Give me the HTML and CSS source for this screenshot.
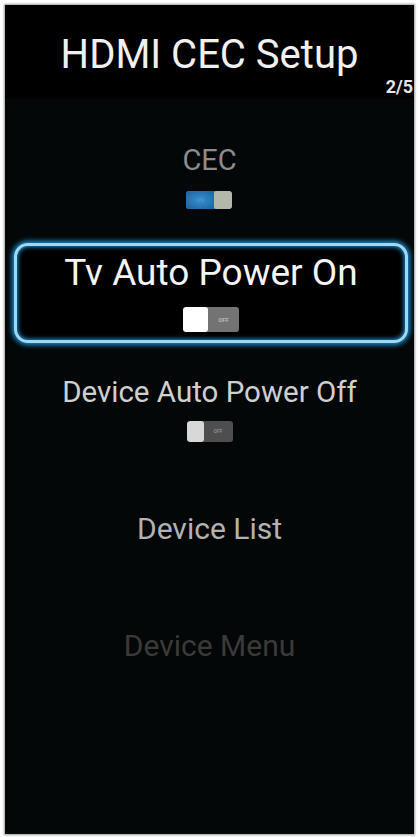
FILE: index.html
```html
<!DOCTYPE html>
<html lang="en">
<head>
<meta charset="utf-8">
<title>HDMI CEC Setup</title>
<link rel="stylesheet" href="styles.css">
</head>
<body>
<div class="screen">
  <header class="header">
    <h1 class="title">HDMI CEC Setup</h1>
    <div class="page">2/5</div>
  </header>
  <main class="menu">
    <div class="item item-cec">
      <div class="label label-cec">CEC</div>
      <div class="toggle toggle-on"><span class="track-on">ON</span><span class="knob"></span></div>
    </div>
    <div class="item item-focus">
      <div class="label label-focus">Tv Auto Power On</div>
      <div class="toggle toggle-focus"><span class="knob"></span><span class="off-text">OFF</span></div>
    </div>
    <div class="item item-dapo">
      <div class="label label-dapo">Device Auto Power Off</div>
      <div class="toggle toggle-off"><span class="knob"></span><span class="off-text">OFF</span></div>
    </div>
    <div class="item item-list">
      <div class="label label-list">Device List</div>
    </div>
    <div class="item item-dmenu">
      <div class="label label-dmenu">Device Menu</div>
    </div>
  </main>
</div>
</body>
</html>
```
FILE: styles.css
```css
html, body {
  margin: 0;
  padding: 0;
  background: #ffffff;
}
body {
  width: 420px;
  height: 837px;
  overflow: hidden;
  font-family: Roboto, "Noto Sans", "Liberation Sans", sans-serif;
}
.screen {
  margin: 5px 6px 3px 5px;
  width: 409px;
  height: 829px;
  background: #040707;
  box-shadow: 0 0 2px 1px #9a9a9a;
  overflow: hidden;
  display: flex;
  flex-direction: column;
}
.header {
  background: #000000;
  padding: 30px 0 2px;
  box-sizing: border-box;
  display: flex;
  flex-direction: column;
  align-items: center;
}
.title {
  margin: 0;
  font-size: 40px;
  line-height: 1;
  font-weight: 400;
  color: #f0f0f0;
}
.page {
  align-self: flex-end;
  margin-top: 3px;
  margin-right: 1px;
  font-size: 18px;
  line-height: 1;
  font-weight: 700;
  color: #e6e6e6;
}
.menu {
  display: flex;
  flex-direction: column;
  align-items: center;
  padding-top: 48px;
}
.item {
  display: flex;
  flex-direction: column;
  align-items: center;
}
.label {
  line-height: 1;
  white-space: nowrap;
}
.label-cec {
  font-size: 29px;
  color: #8c8c8c;
}
.item-cec .toggle { margin-top: 16px; }

.item-focus {
  align-self: stretch;
  margin: 34px 6px 0 9px;
  height: 100px;
  box-sizing: border-box;
  border: 3px solid #9fd8f2;
  border-radius: 14px;
  padding-top: 8px;
  background: #000;
  box-shadow: 0 0 5px 2px #1b8fd2, inset 0 0 4px 1px #1b8fd2;
}
.label-focus {
  font-size: 37px;
  color: #f4f4f4;
}
.item-focus .toggle { margin-top: 16px; }

.item-dapo { margin-top: 35px; }
.label-dapo {
  font-size: 29.5px;
  color: #cfcfcf;
}
.item-dapo .toggle { margin-top: 13px; }

.item-list { margin-top: 72px; }
.label-list {
  font-size: 30px;
  color: #b2b2b2;
}
.item-dmenu { margin-top: 87px; }
.label-dmenu {
  font-size: 30px;
  color: #3a3a3a;
}

.toggle {
  display: flex;
  align-items: stretch;
  border-radius: 3px;
  overflow: hidden;
}
.toggle-on {
  width: 46px;
  height: 18px;
  background: #1f6fae;
}
.track-on {
  flex: 1;
  font-size: 5px;
  color: #4a9ad0;
  display: flex;
  align-items: center;
  justify-content: center;
  background: radial-gradient(ellipse at center, #3a8fd0 0%, #1f6aa8 80%);
}
.toggle-on .knob {
  width: 18px;
  background: #b4b8aa;
  border-radius: 2px;
}
.toggle-focus {
  width: 56px;
  height: 25px;
  background: #737373;
}
.toggle-focus .knob {
  width: 25px;
  background: #ffffff;
  border-radius: 3px;
}
.off-text {
  flex: 1;
  display: flex;
  align-items: center;
  justify-content: center;
  font-size: 6px;
  font-weight: 700;
  color: #b8b8b8;
}
.toggle-off {
  width: 46px;
  height: 21px;
  background: #4e4e4e;
}
.toggle-off .knob {
  width: 17px;
  background: #d8d8d8;
  border-radius: 3px;
}
.toggle-off .off-text {
  font-size: 5px;
  color: #8a8a8a;
}
```
